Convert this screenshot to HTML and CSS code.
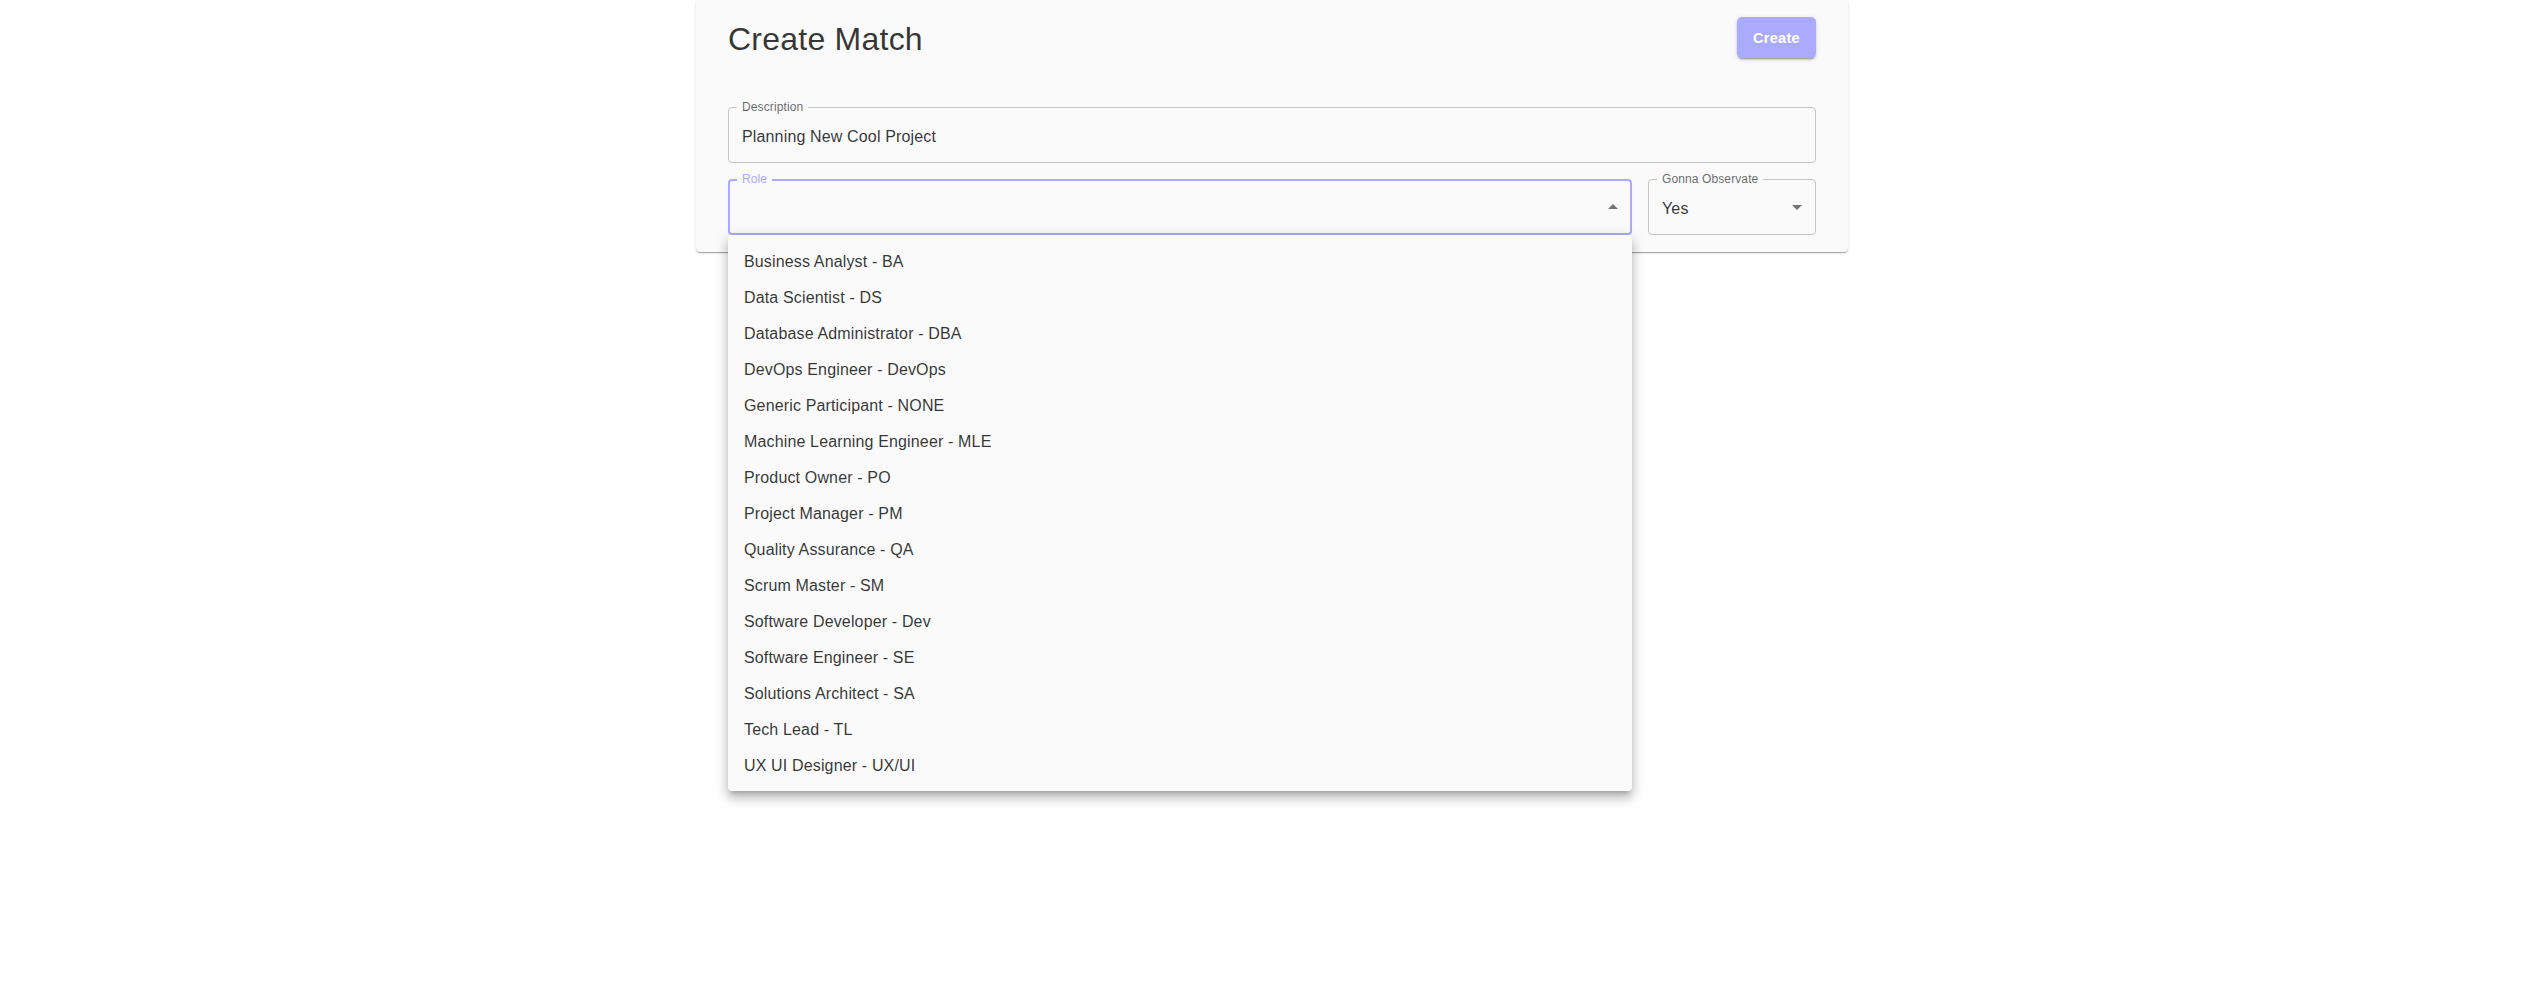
FILE: index.html
```html
<!DOCTYPE html>
<html lang="en">
<head>
<meta charset="utf-8">
<title>Create Match</title>
<link rel="stylesheet" href="styles.css">
</head>
<body>
<div class="page">
  <div class="card">
    <div class="header">
      <h1 class="title">Create Match</h1>
      <button class="btn">Create</button>
    </div>
    <div class="fields">
      <div class="field">
        <span class="label">Description</span>
        <div class="value">Planning New Cool Project</div>
      </div>
      <div class="row">
        <div class="field field-focused select role">
          <span class="label label-focused">Role</span>
          <div class="value"></div>
          <svg class="arrow" viewBox="0 0 24 24" width="24" height="24"><path d="M7 14l5-5 5 5z"/></svg>
          <ul class="menu">
            <li class="item">Business Analyst - BA</li>
            <li class="item">Data Scientist - DS</li>
            <li class="item">Database Administrator - DBA</li>
            <li class="item">DevOps Engineer - DevOps</li>
            <li class="item">Generic Participant - NONE</li>
            <li class="item">Machine Learning Engineer - MLE</li>
            <li class="item">Product Owner - PO</li>
            <li class="item">Project Manager - PM</li>
            <li class="item">Quality Assurance - QA</li>
            <li class="item">Scrum Master - SM</li>
            <li class="item">Software Developer - Dev</li>
            <li class="item">Software Engineer - SE</li>
            <li class="item">Solutions Architect - SA</li>
            <li class="item">Tech Lead - TL</li>
            <li class="item">UX UI Designer - UX/UI</li>
          </ul>
        </div>
        <div class="field select observe">
          <span class="label">Gonna Observate</span>
          <div class="value">Yes</div>
          <svg class="arrow" viewBox="0 0 24 24" width="24" height="24"><path d="M7 10l5 5 5-5z"/></svg>
        </div>
      </div>
    </div>
  </div>
</div>
</body>
</html>
```

FILE: styles.css
```css
* { box-sizing: border-box; }

html, body {
  margin: 0;
  padding: 0;
  min-height: 100%;
  background: #ffffff;
  font-family: "Liberation Sans", Arial, Helvetica, sans-serif;
  color: rgba(0, 0, 0, 0.87);
}

.page {
  display: flex;
  justify-content: center;
  align-items: flex-start;
  min-height: 990px;
}

.card {
  position: relative;
  width: 1152px;
  background: #fafafa;
  border-radius: 0 0 4px 4px;
  box-shadow: 0 2px 1px -1px rgba(0,0,0,0.2), 0 1px 1px 0 rgba(0,0,0,0.14), 0 1px 3px 0 rgba(0,0,0,0.12);
  padding: 17px 32px 17px;
}

.header {
  display: flex;
  justify-content: space-between;
  align-items: center;
  height: 41px;
}

.title {
  margin: 0;
  font-size: 32px;
  font-weight: 400;
  line-height: 41px;
  letter-spacing: 0.235px;
  color: rgba(0, 0, 0, 0.8);
  position: relative;
  top: 2px;
}

.btn {
  width: 79px;
  height: 41px;
  border: none;
  border-radius: 5px;
  background: #aaaaff;
  color: #ffffff;
  font-family: "Liberation Sans", Arial, sans-serif;
  font-size: 14.5px;
  font-weight: 700;
  letter-spacing: 0.3px;
  box-shadow: 0 3px 1px -2px rgba(0,0,0,0.2), 0 2px 2px 0 rgba(0,0,0,0.14), 0 1px 5px 0 rgba(0,0,0,0.12);
  padding: 0;
}

.fields {
  margin-top: 49px;
  display: flex;
  flex-direction: column;
  gap: 16px;
}

.row {
  display: flex;
  gap: 16px;
}

.field {
  position: relative;
  height: 56px;
  border: 1px solid #c4c4c4;
  border-radius: 4px;
  display: flex;
  align-items: center;
  padding: 0 13px;
}

.field-focused {
  border: 2px solid #aaaaff;
  padding: 0 12px;
  z-index: 5;
}

.role { flex: 1; }
.observe { width: 168px; flex: none; }

.label {
  position: absolute;
  top: -7px;
  left: 8px;
  padding: 0 5px;
  background: #fafafa;
  font-size: 12px;
  line-height: 12px;
  letter-spacing: 0.11px;
  color: rgba(0, 0, 0, 0.6);
  white-space: nowrap;
}

.label-focused {
  top: -8px;
  left: 7px;
  color: #aaaaff;
}

.value {
  font-size: 16px;
  line-height: 23px;
  letter-spacing: 0.15px;
  flex: 1;
  color: rgba(0, 0, 0, 0.8);
  position: relative;
  top: 1px;
}

.arrow {
  position: absolute;
  right: 6px;
  top: 50%;
  margin-top: -12px;
  fill: rgba(0, 0, 0, 0.54);
}

.field-focused .arrow { right: 5px; }

.menu {
  position: absolute;
  top: 100%;
  left: -2px;
  right: -2px;
  margin: 2px 0 0;
  list-style: none;
  padding: 8px 0;
  background: #fafafa;
  border-radius: 4px;
  box-shadow: 0 5px 5px -3px rgba(0,0,0,0.2), 0 8px 10px 1px rgba(0,0,0,0.14), 0 3px 14px 2px rgba(0,0,0,0.12);
  z-index: 10;
}

.item {
  height: 36px;
  padding: 7px 16px 5px;
  font-size: 16px;
  line-height: 24px;
  letter-spacing: 0.15px;
  color: rgba(0, 0, 0, 0.8);
}
```
